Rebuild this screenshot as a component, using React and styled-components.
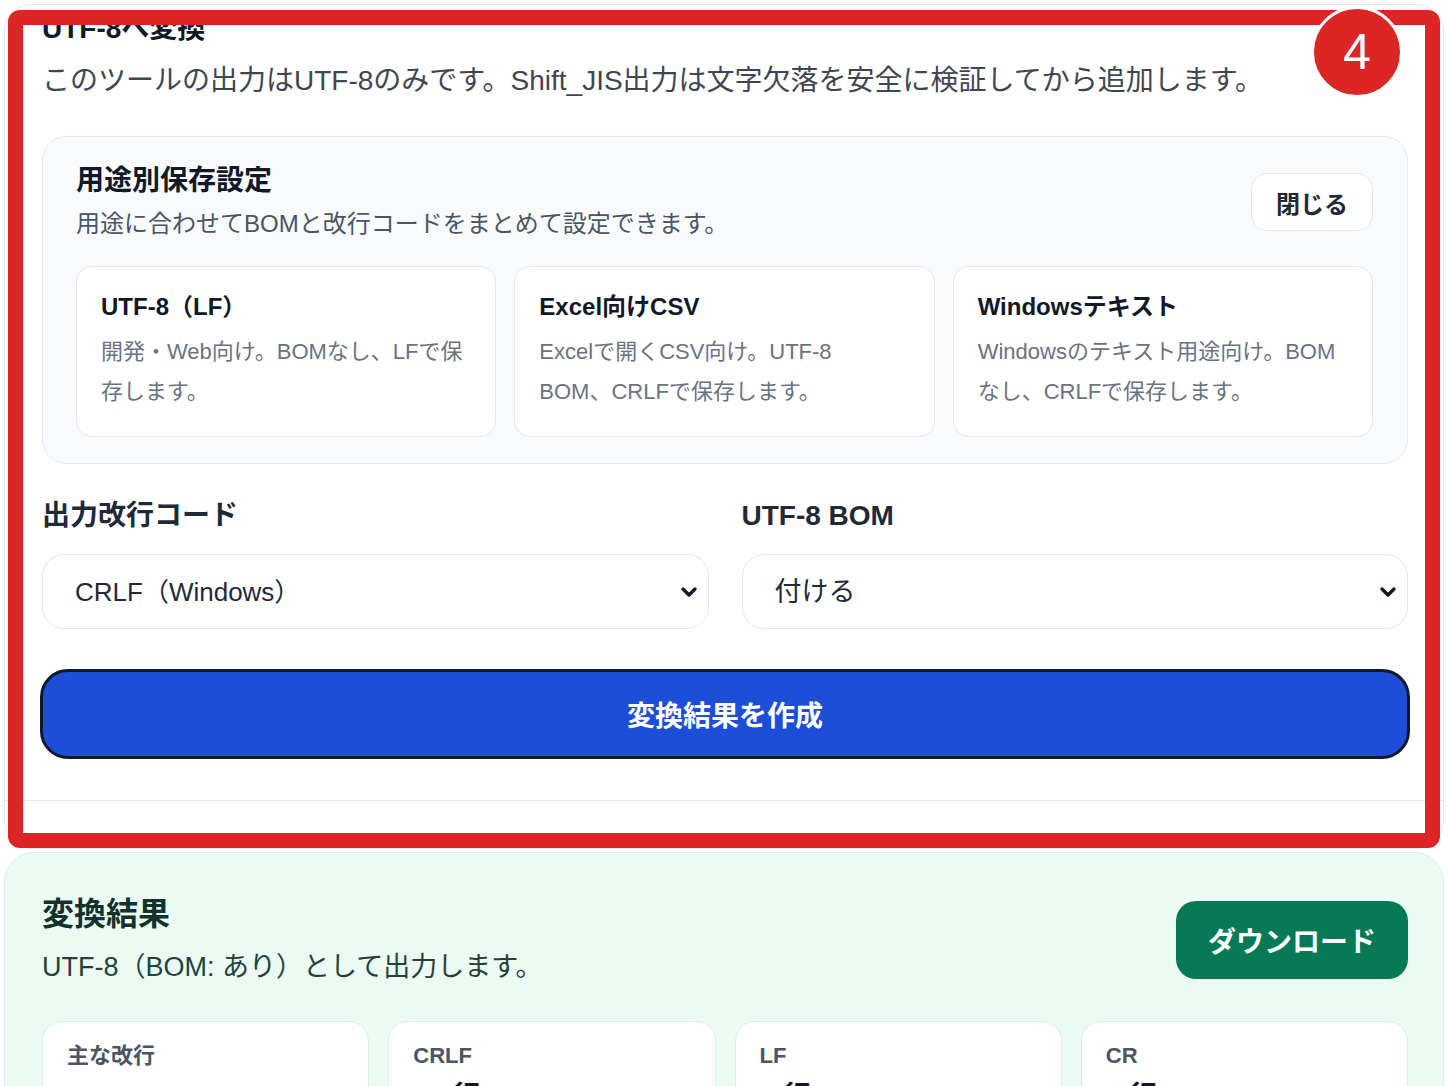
import React from "react";
import styled, { createGlobalStyle } from "styled-components";

const GlobalStyle = createGlobalStyle`
  html, body { margin: 0; padding: 0; background: #ffffff; }
  body {
    font-family: "Liberation Sans", "Noto Sans CJK JP", sans-serif;
    color: #111827;
    overflow: hidden;
  }
  * { box-sizing: border-box; }
`;

const Page = styled.div`
  position: relative;
  width: 1448px;
  height: 1086px;
  overflow: hidden;
  background: #ffffff;
`;

const Card = styled.section`
  margin: 4px 4px 0;
  border: 1px solid #e5e7eb;
  border-radius: 28px;
  padding: 7px 35px 47px 37px;
  background: #ffffff;
`;

const Title = styled.h2`
  margin: 0;
  font-size: 28px;
  line-height: 34px;
  font-weight: 700;
  color: #111827;
`;

const Lead = styled.p`
  margin: 15px 0 0;
  font-size: 28px;
  line-height: 40px;
  color: #3f4652;
  white-space: nowrap;
`;

const PresetPanel = styled.div`
  margin-top: 35px;
  border: 1px solid #e7eaee;
  border-radius: 24px;
  background: #f8fafc;
  padding: 26px 34px 26px 33px;
`;

const PanelHeader = styled.div`
  display: flex;
  align-items: center;
  justify-content: space-between;
`;

const PanelTitle = styled.h3`
  margin: 0;
  font-size: 28px;
  line-height: 36px;
  font-weight: 700;
  color: #111827;
`;

const PanelSub = styled.p`
  margin: 8px 0 0;
  font-size: 24px;
  line-height: 34px;
  color: #4b5563;
`;

const GhostButton = styled.button`
  width: 122px;
  height: 58px;
  border: 1px solid #e5e7eb;
  border-radius: 16px;
  background: #ffffff;
  font-family: inherit;
  font-size: 24px;
  font-weight: 700;
  color: #1f2937;
`;

const PresetGrid = styled.div`
  margin-top: 25px;
  display: grid;
  grid-template-columns: repeat(3, 1fr);
  gap: 18px;
`;

const PresetCard = styled.div`
  background: #ffffff;
  border: 1px solid #e5e7eb;
  border-radius: 16px;
  padding: 24px 24px 24px;
`;

const PresetTitle = styled.div`
  font-size: 24px;
  line-height: 32px;
  font-weight: 700;
  color: #111827;
`;

const PresetDesc = styled.div`
  margin-top: 9px;
  font-size: 22px;
  line-height: 40px;
  color: #6b7280;
`;

const Fields = styled.div`
  margin-top: 34px;
  display: grid;
  grid-template-columns: 1fr 1fr;
  column-gap: 33px;
`;

const Field = styled.label`
  display: flex;
  flex-direction: column;
  gap: 20px;
`;

const FieldLabel = styled.span`
  font-size: 28px;
  line-height: 36px;
  font-weight: 700;
  color: #1f2937;
`;

const SelectBox = styled.div`
  display: flex;
  align-items: center;
  height: 75px;
  border: 1px solid #e5e7eb;
  border-radius: 22px;
  background: #ffffff;
  padding: 0 10px 0 32px;
`;

const Select = styled.select`
  flex: 1;
  appearance: none;
  -webkit-appearance: none;
  border: none;
  outline: none;
  background: transparent;
  font-family: inherit;
  font-size: ${(p) => p.$size || 26}px;
  color: #1f2937;
  padding: 0;
`;

const Chevron = styled.svg`
  width: 18px;
  height: 12px;
  flex: none;
`;

const PrimaryButton = styled.button`
  display: block;
  width: calc(100% + 4px);
  margin: 40px -2px 0;
  height: 90px;
  border: 3px solid #0f172a;
  border-radius: 28px;
  background: #1d4ed8;
  color: #ffffff;
  font-family: inherit;
  font-size: 28px;
  font-weight: 700;
`;

const Divider = styled.hr`
  margin: 41px -35px 0 -37px;
  border: none;
  height: 1px;
  background: #e5e7eb;
`;

const ResultPanel = styled.section`
  margin: 3px 4px 0;
  border: 1px solid #d3f3e4;
  border-radius: 30px;
  background: #ebfbf4;
  padding: 41px 35px 40px 37px;
`;

const ResultHeader = styled.div`
  display: flex;
  align-items: center;
  justify-content: space-between;
`;

const ResultTitle = styled.h2`
  margin: 0;
  font-size: 32px;
  line-height: 40px;
  font-weight: 700;
  color: #12322a;
`;

const ResultDesc = styled.p`
  margin: 14px 0 0;
  font-size: 27px;
  line-height: 38px;
  color: #23413a;
`;

const DownloadButton = styled.button`
  width: 232px;
  height: 78px;
  border: none;
  border-radius: 20px;
  background: #077a55;
  color: #ffffff;
  font-family: inherit;
  font-size: 28px;
  font-weight: 700;
`;

const StatGrid = styled.div`
  margin-top: 35px;
  display: grid;
  grid-template-columns: repeat(4, 1fr);
  gap: 19px;
`;

const StatCard = styled.div`
  background: #ffffff;
  border: 1px solid #dcefe6;
  border-radius: 20px;
  padding: 19px 24px 22px;
`;

const StatLabel = styled.div`
  font-size: 22px;
  line-height: 30px;
  font-weight: 700;
  color: #4b5563;
`;

const StatValue = styled.div`
  margin-top: 8px;
  font-size: 28px;
  line-height: 36px;
  font-weight: 700;
  color: #111827;
`;

const HighlightFrame = styled.div`
  position: absolute;
  left: 8px;
  top: 10px;
  width: 1432px;
  height: 838px;
  border: 15px solid #dc2626;
  border-radius: 12px;
  pointer-events: none;
`;

const Badge = styled.div`
  position: absolute;
  left: 1311px;
  top: 6px;
  width: 92px;
  height: 92px;
  border-radius: 50%;
  border: 3px solid #ffffff;
  background: #dc2626;
  color: #ffffff;
  display: flex;
  align-items: center;
  justify-content: center;
  font-family: "Liberation Sans", sans-serif;
  font-size: 50px;
  line-height: 1;
`;

const presets = [
  { title: "UTF-8（LF）", desc: "開発・Web向け。BOMなし、LFで保存します。" },
  { title: "Excel向けCSV", desc: "Excelで開くCSV向け。UTF-8 BOM、CRLFで保存します。" },
  { title: "Windowsテキスト", desc: "Windowsのテキスト用途向け。BOMなし、CRLFで保存します。" },
];

const stats = [
  { label: "主な改行", value: "CRLF" },
  { label: "CRLF", value: "12 行" },
  { label: "LF", value: "0 行" },
  { label: "CR", value: "0 行" },
];

const ChevronIcon = () => (
  <Chevron viewBox="0 0 18 12" aria-hidden="true">
    <path d="M3 3 L9 9 L15 3" fill="none" stroke="#111827" strokeWidth="3.4" strokeLinecap="round" strokeLinejoin="round" />
  </Chevron>
);

export default function App() {
  return (
    <Page>
      <GlobalStyle />
      <Card>
        <Title>UTF-8へ変換</Title>
        <Lead>このツールの出力はUTF-8のみです。Shift_JIS出力は文字欠落を安全に検証してから追加します。</Lead>

        <PresetPanel>
          <PanelHeader>
            <div>
              <PanelTitle>用途別保存設定</PanelTitle>
              <PanelSub>用途に合わせてBOMと改行コードをまとめて設定できます。</PanelSub>
            </div>
            <GhostButton type="button">閉じる</GhostButton>
          </PanelHeader>
          <PresetGrid>
            {presets.map((p) => (
              <PresetCard key={p.title}>
                <PresetTitle>{p.title}</PresetTitle>
                <PresetDesc>{p.desc}</PresetDesc>
              </PresetCard>
            ))}
          </PresetGrid>
        </PresetPanel>

        <Fields>
          <Field>
            <FieldLabel>出力改行コード</FieldLabel>
            <SelectBox>
              <Select defaultValue="crlf" $size={26}>
                <option value="crlf">CRLF（Windows）</option>
                <option value="lf">LF（Unix / Mac）</option>
                <option value="cr">CR（旧Mac）</option>
              </Select>
              <ChevronIcon />
            </SelectBox>
          </Field>
          <Field>
            <FieldLabel>UTF-8 BOM</FieldLabel>
            <SelectBox>
              <Select defaultValue="on" $size={27}>
                <option value="on">付ける</option>
                <option value="off">付けない</option>
              </Select>
              <ChevronIcon />
            </SelectBox>
          </Field>
        </Fields>

        <PrimaryButton type="button">変換結果を作成</PrimaryButton>
        <Divider />
      </Card>

      <ResultPanel>
        <ResultHeader>
          <div>
            <ResultTitle>変換結果</ResultTitle>
            <ResultDesc>UTF-8（BOM: あり）として出力します。</ResultDesc>
          </div>
          <DownloadButton type="button">ダウンロード</DownloadButton>
        </ResultHeader>
        <StatGrid>
          {stats.map((s) => (
            <StatCard key={s.label}>
              <StatLabel>{s.label}</StatLabel>
              <StatValue>{s.value}</StatValue>
            </StatCard>
          ))}
        </StatGrid>
      </ResultPanel>

      <HighlightFrame />
      <Badge>4</Badge>
    </Page>
  );
}
